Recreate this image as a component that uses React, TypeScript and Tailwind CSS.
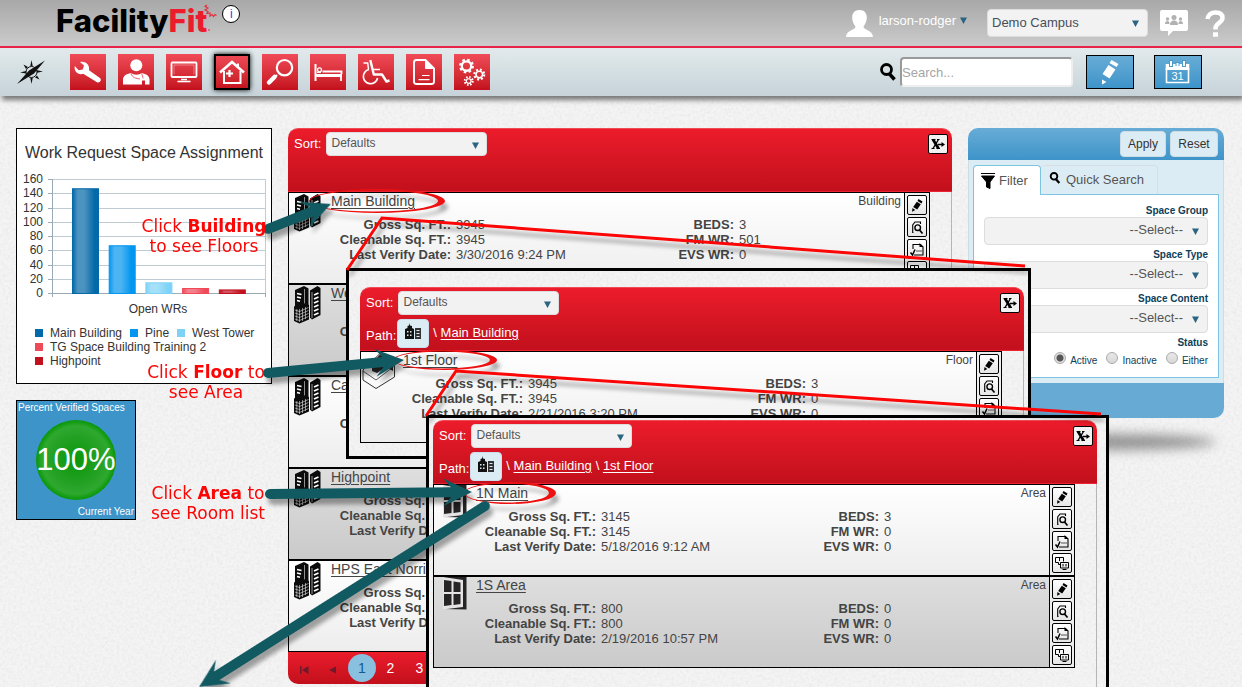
import { useState } from "react"
import type { ReactNode } from "react"

const bars = [
  { name: 'Main Building', value: 147, color: '#0469a8', light: '#4b93c0' },
  { name: 'Pine', value: 67, color: '#0396ef', light: '#4cb4f3' },
  { name: 'West Tower', value: 15, color: '#7ed2f7', light: '#a5e0f9' },
  { name: 'TG Space Building Training 2', value: 7, color: '#ef4a5a', light: '#f57f8a' },
  { name: 'Highpoint', value: 5, color: '#c2101f', light: '#d4525d' },
]

const ticks = [160, 140, 120, 100, 80, 60, 40, 20, 0]

type Space = {
  name: string
  sqft?: string
  verified?: string
  counts?: { beds: string; fm: string; evs: string }
}

const buildings: Space[] = [
  { name: 'Main Building', sqft: '3945', verified: '3/30/2016 9:24 PM', counts: { beds: '3', fm: '501', evs: '0' } },
  { name: 'West Tower' },
  { name: 'Care Center' },
  { name: 'Highpoint' },
  { name: 'HPS East Norriton' },
]

const floors: Space[] = [
  { name: '1st Floor', sqft: '3945', verified: '2/21/2016 3:20 PM', counts: { beds: '3', fm: '0', evs: '0' } },
]

const areas: Space[] = [
  { name: '1N Main', sqft: '3145', verified: '5/18/2016 9:12 AM', counts: { beds: '3', fm: '0', evs: '0' } },
  { name: '1S Area', sqft: '800', verified: '2/19/2016 10:57 PM', counts: { beds: '0', fm: '0', evs: '0' } },
]

/* ---------- icons ---------- */

function Caret({ className = '' }: { className?: string }) {
  return (
    <svg viewBox="0 0 7 7" className={`h-[7px] w-[7px] ${className}`} fill="#2b6480" aria-hidden="true">
      <path d="M0 .5h7L3.5 7z" />
    </svg>
  )
}

function Gear({ cx, cy, r }: { cx: number; cy: number; r: number }) {
  const tooth = (2 * Math.PI * (r + 1.6)) / 16
  return (
    <g fill="none" stroke="#fff">
      <circle cx={cx} cy={cy} r={r} strokeWidth={r * 0.5} />
      <circle cx={cx} cy={cy} r={r + 1.6} strokeWidth="2.2" strokeDasharray={`${tooth} ${tooth}`} />
    </g>
  )
}

const modules: { label: string; icon: ReactNode }[] = [
  {
    label: 'Work requests',
    icon: <path fill="#fff" d="M10 8l4 3.6-1.2 4-4.2.7L4.8 12c-1.2 5 3.2 9.400 8.400 7.800L27 28.200c2.600 1.300 4.800-1.700 3.300-3.900L19 16.300C20 10.500 15.500 6.500 10 8z" />,
  },
  {
    label: 'People',
    icon: (
      <g>
        <circle cx="18.300" cy="11.300" r="6" fill="#fff" />
        <path fill="#fff" d="M5 30.500v-5c0-3.500 3-5.500 8-6.500 3 2.300 8 2.300 10.500 0 5 1 8 3 8 6.500v5h-4.500v-4h-3v4z" />
        <path fill="none" stroke="#dd3a48" strokeWidth=".8" d="M13 19.500c1 4 5 5 9 5.500M23.500 19.500c1 2 1.500 3.500 1.500 5" />
      </g>
    ),
  },
  {
    label: 'Equipment',
    icon: (
      <g fill="none" stroke="#fff">
        <rect x="5.500" y="8.500" width="25" height="14.500" rx="1" strokeWidth="1.800" />
        <path strokeWidth="1" opacity=".35" d="M8 20.500V11h20v9.500" />
        <path strokeWidth="1.600" d="M11.500 27.500h13" />
        <path strokeWidth="1.500" d="M15 25.500h6" />
      </g>
    ),
  },
  {
    label: 'Space',
    icon: (
      <g fill="none" stroke="#fff" strokeWidth="2">
        <path d="M6 18.500L18 8l12 10.500" strokeWidth="2.600" />
        <path d="M10 17v12h16.500V17M24 9.500v4" />
        <path d="M12 19.500h7M15.500 16v7" strokeWidth="2.200" />
      </g>
    ),
  },
  {
    label: 'Search',
    icon: (
      <g fill="none" stroke="#fff">
        <circle cx="22.500" cy="13.700" r="7.700" strokeWidth="2.200" />
        <path d="M15 21l-2 2" strokeWidth="2" />
        <path d="M12.500 23L7 28.500" strokeWidth="4.500" strokeLinecap="round" />
      </g>
    ),
  },
  {
    label: 'Beds',
    icon: (
      <g fill="none" stroke="#fff">
        <path d="M5.500 10v17" strokeWidth="2" />
        <path d="M5 21.500h27" strokeWidth="3" />
        <path d="M31 20v7M12.500 17.500h19v2.500" strokeWidth="1.800" />
        <path d="M7 18.500h4" strokeWidth="1" />
        <circle cx="9.500" cy="15.800" r="2" strokeWidth="1.300" />
      </g>
    ),
  },
  {
    label: 'Accessibility',
    icon: (
      <g fill="none" stroke="#fff" strokeWidth="2" strokeLinejoin="round">
        <path d="M5.500 9h4.200l.8 6" strokeWidth="1.500" />
        <path d="M12.300 6l3.500 14.500h8.200l4.500 7 3-1" strokeWidth="2.400" />
        <path d="M11 15.500a7.200 7.200 0 1 0 8.600 8.500" strokeWidth="1.700" />
        <path d="M14 15.500h8" strokeWidth="1.500" />
      </g>
    ),
  },
  {
    label: 'Documents',
    icon: (
      <g fill="none" stroke="#fff" strokeWidth="1.900">
        <path d="M19.500 6H10.500a2.500 2.500 0 0 0-2.500 2.500v19a2.500 2.500 0 0 0 2.500 2.500h15a2.500 2.500 0 0 0 2.500-2.500V14.500z" />
        <path d="M19.500 6v8.500H28z" fill="#fff" strokeWidth="1" />
        <path d="M16 21.500h7.500M12.500 25.700h11" strokeWidth="1.200" />
      </g>
    ),
  },
  {
    label: 'Settings',
    icon: (
      <g>
        <Gear cx={12.500} cy={12} r={4.700} />
        <Gear cx={25.300} cy={20.500} r={3.300} />
        <Gear cx={14.700} cy={27} r={2.300} />
      </g>
    ),
  },
]

function BuildingIcon() {
  return (
    <svg viewBox="0 0 28 39" className="h-[39px] w-7" aria-hidden="true">
      <path fill="#0b0b0b" d="M1 5L10 1l4.500 2.500V20L7 24l-6-3z" />
      <path stroke="#fff" strokeWidth="1.500" d="M3 8.500l4.500 1M3 12l4 1M3 15.500l3 .8" />
      <path stroke="#ccc" strokeWidth=".7" d="M10.500 4v15" />
      <path fill="#0b0b0b" d="M16 5.500L23.500 1 26.500 3v27L18 34.500l-2-2z" />
      <path stroke="#ddd" strokeWidth=".7" d="M18 7v26" />
      <path stroke="#fff" strokeWidth="1.700" d="M20 10l4.500-2M20 14l4.500-2M20 18l4.500-2M20 22l4.500-2M20 26l4.500-2M20 30l4.500-2" />
      <path fill="#0b0b0b" d="M0 21.500l8-4 7 2.500v14.500l-9.500 4L0 36z" />
      <path stroke="#e4e4e4" strokeWidth=".6" fill="none" d="M.8 25l4.700 1.500 9-4M.8 28l4.700 1.500 9-4M.8 31l4.700 1.500 9-4M.8 34l4.700 1.500 9-4M5.500 24v13M2.800 24v12M8.500 23v13M11.500 22v12" />
    </svg>
  )
}

function FloorIcon() {
  return (
    <svg viewBox="0 0 34 38" className="h-[38px] w-[34px]" aria-hidden="true">
      <path fill="#fafafa" stroke="#333" strokeWidth="1" d="M1 18L18 1.500 32.500 11v14L14 36.500 1 28z" />
      <path fill="#2a2a2a" d="M10 11l8-8.500L31 11v8l-7-4-9 6-5-2z" />
      <path fill="#9a9a9a" d="M15 10l4-3.500 7 4.500-5 4z" />
      <path fill="none" stroke="#333" strokeWidth=".8" d="M1 19l13 9 18.500-14" />
    </svg>
  )
}

function AreaIcon() {
  return (
    <svg viewBox="0 0 24 33" className="ml-1 h-[33px] w-6" aria-hidden="true">
      <path fill="#262424" d="M0 0h23.500v32.500L0 32z" />
      <path fill="#e4e4e4" d="M0 0l20 3v27L0 32.500z" />
      <path fill="#262424" d="M1 3l7.500 1v11H1zM10.500 4.500l7 1V15h-7zM1 17h7.500v11l-7.500 1zM10.500 17h7v10l-7 .900z" />
    </svg>
  )
}

function PencilGlyph() {
  return (
    <g>
      <path d="M11.500 4.500l4 2.500-1 2-4-2.500zM9.800 7.200l4 2.500-3.600 5.300-4-2.600z" />
      <path d="M5.500 13.500l2.800 2L5 17.200z" />
    </g>
  )
}

const actions: { label: string; glyph: ReactNode }[] = [
  { label: 'Edit', glyph: <g transform="translate(-1 -1.500)"><PencilGlyph /></g> },
  {
    label: 'View details',
    glyph: (
      <g fill="none" stroke="#000">
        <path d="M5.500 14.500h-.8V7l2.300-3h5.500v2" strokeWidth="1.100" />
        <circle cx="9.700" cy="9.700" r="2.800" strokeWidth="1.400" />
        <path d="M11.500 12l3 3.500" strokeWidth="1.700" />
      </g>
    ),
  },
  {
    label: 'Checklist',
    glyph: (
      <g fill="none" stroke="#000">
        <path d="M5 9V4.500h7.500l2.500 2.500v8H6" strokeWidth="1.100" />
        <path d="M11.500 3l4 4h-4z" fill="#000" stroke="none" />
        <path d="M2.500 12.500l2 2.500 2.500-5.500" strokeWidth="1.500" />
        <path d="M8 11h6" stroke="#888" strokeWidth="1.500" />
      </g>
    ),
  },
  {
    label: 'Rooms',
    glyph: (
      <g fill="none" stroke="#000" strokeWidth="1">
        <path d="M7 10.500H5.500v-2h-3v-5h8v4" />
        <path d="M6.500 4v3M7.500 8.500h8v5.500h-8zM10 10v2.500M13 10v2.500M9.500 15.500h4" />
      </g>
    ),
  },
]

function MagnifierIcon({ className }: { className: string }) {
  return (
    <svg viewBox="0 0 16 18" className={className} fill="none" stroke="#000" aria-hidden="true">
      <circle cx="6.500" cy="6.500" r="5" strokeWidth="2.800" />
      <path d="M9.500 11l5 5.500" strokeWidth="3.500" />
    </svg>
  )
}

/* ---------- shared pieces ---------- */

function Paper({ id }: { id: string }) {
  return (
    <svg className="pointer-events-none absolute inset-0 h-full w-full" aria-hidden="true">
      <filter id={id}>
        <feTurbulence type="fractalNoise" baseFrequency="0.350" numOctaves="4" seed="4" />
        <feColorMatrix values="0 0 0 0 .45  0 0 0 0 .45  0 0 0 0 .45  .5 .5 0 0 -.4" />
      </filter>
      <rect width="100%" height="100%" filter={`url(#${id})`} opacity=".4" />
    </svg>
  )
}

function SpaceRow({ space, type, icon, dark }: { space: Space; type: string; icon: ReactNode; dark: boolean }) {
  return (
    <div className={`mr-[21px] flex h-[92px] border border-black bg-linear-to-b ${dark ? 'from-[#dedede] to-[#cacaca]' : 'from-white to-[#ededed]'}`}>
      <div className="w-[42px] shrink-0 pl-[5px]">{icon}</div>
      <div className="min-w-0 flex-1">
        <div className="flex justify-between pr-[3px]">
          <a href="#" className="text-sm leading-4 text-[#444] underline underline-offset-2">{space.name}</a>
          {space.counts && <span className="text-xs leading-4 text-[#444]">{type}</span>}
        </div>
        <div className="mt-2 flex whitespace-nowrap">
          <dl className="grid w-[283px] grid-cols-[120px_1fr] gap-x-[5px] text-[13px] leading-[15px]">
            <dt className="text-right font-bold">Gross Sq. FT.:</dt>
            <dd>{space.sqft}</dd>
            <dt className="justify-self-end font-bold">Cleanable Sq. FT.:</dt>
            <dd>{space.sqft}</dd>
            <dt className="text-right font-bold">Last Verify Date:</dt>
            <dd>{space.verified}</dd>
          </dl>
          {space.counts && (
            <dl className="grid grid-cols-[120px_1fr] gap-x-[5px] text-[13px] leading-[15px]">
              <dt className="text-right font-bold">BEDS:</dt>
              <dd>{space.counts.beds}</dd>
              <dt className="text-right font-bold">FM WR:</dt>
              <dd>{space.counts.fm}</dd>
              <dt className="text-right font-bold">EVS WR:</dt>
              <dd>{space.counts.evs}</dd>
            </dl>
          )}
        </div>
      </div>
      <div className="flex w-[25px] shrink-0 flex-col gap-[2px] border-l border-black bg-[#eee] pt-[2px] pl-[2px]">
        {actions.map((a) => (
          <button key={a.label} aria-label={a.label} className="h-5 w-5 rounded-xs border border-black bg-linear-to-b from-white to-[#e6e6e6]">
            <svg viewBox="0 0 18 18" className="h-[18px] w-[18px]">{a.glyph}</svg>
          </button>
        ))}
      </div>
    </div>
  )
}

type ListProps = {
  id: string
  type: string
  spaces: Space[]
  icon: ReactNode
  path?: string[]
  children?: ReactNode
}

function SpaceList({ id, type, spaces, icon, path, children }: ListProps) {
  return (
    <section className="relative flex w-full flex-1 flex-col">
      <div className="flex h-16 justify-between rounded-t-[10px] border-t border-b border-t-[#f04a55] border-b-[#ee2233] bg-linear-to-b from-[#ec1c2b] to-[#c2101c] pt-[3px] pr-1 pl-[6px] text-white">
        <div className="text-[13px]">
          <div className="flex items-center gap-[5px]">
            <label htmlFor={id}>Sort:</label>
            <div className="relative">
              <select id={id} className="h-6 w-[161px] appearance-none rounded border border-[#ddd] bg-[#f2f2f2] px-1 pb-[2px] text-xs text-[#555]">
                <option>Defaults</option>
              </select>
              <Caret className="absolute top-[10px] right-2" />
            </div>
          </div>
          {path && (
            <div className="mt-1 flex items-center">
              <span className="pt-1">Path:</span>
              <button aria-label="All buildings" className="mr-1 ml-px flex h-[29px] w-8 justify-center rounded border border-[#cde] bg-[#dcecf4] pt-[3px]">
                <svg viewBox="0 0 16 16" className="h-4 w-4" fill="#111">
                  <path fillRule="evenodd" d="M0 16V6l2.500-1V3L4 2.500 4.500 0 5 2.500 7 3v2l2 1v10zM2 8v1.500h1.500V8zm3 0v1.500h1.500V8zM2 11.500V13h1.500v-1.500zm3 0V13h1.500v-1.500z" />
                  <path fill="#333" fillRule="evenodd" d="M10 5h6v11h-6zm1.500 2v1h3V7zm0 3v1h3v-1zm0 3v1h3v-1z" />
                </svg>
              </button>
              <nav aria-label="Path" className="flex gap-1 pb-[2px]">
                {path.map((p) => (
                  <span key={p}>{'\\ '}<a href="#" className="underline underline-offset-2">{p}</a></span>
                ))}
              </nav>
            </div>
          )}
        </div>
        <button aria-label="Export to Excel" className="mt-[2px] h-5 w-5 shrink-0 rounded-xs border border-black bg-[#f2f2f2]">
          <svg viewBox="0 0 18 18" className="h-[18px] w-[18px]" fill="none" stroke="#000">
            <path d="M4 4.500l5.500 9" strokeWidth="2.800" />
            <path d="M9.500 4.500L4 13.500" strokeWidth="1.400" />
            <path d="M2.500 4.500h4M8 4.500h2.500M2.500 13.500h3M7.500 13.500h3.500" strokeWidth="1.100" />
            <path d="M9 9.500h5" strokeWidth="1.500" />
            <path d="M12.500 7l3.500 2.500-3.500 2.500z" fill="#000" stroke="none" />
          </svg>
        </button>
      </div>
      <div className="flex-1 border-r border-[#b5b5b5]">
        {spaces.map((s, i) => (
          <SpaceRow key={s.name} space={s} type={type} icon={icon} dark={i % 2 == 1} />
        ))}
      </div>
      {children}
    </section>
  )
}

function WorkRequestChart() {
  const y = (v: number) => 115 - (v * 114) / 160
  return (
    <div className="h-64 border border-black bg-white">
      <h2 className="pt-[15px] text-center text-base leading-[18px] text-[#333]">Work Request Space Assignment</h2>
      <svg viewBox="0 0 254 140" className="mt-4 h-[140px] w-full overflow-visible font-['Liberation_Sans',Arial,sans-serif] text-xs" fill="#333">
        <defs>
          {bars.map((b, i) => (
            <linearGradient key={b.name} id={`bar${i}`}>
              <stop offset="0" stopColor={b.color} />
              <stop offset=".2" stopColor={b.light} />
              <stop offset=".45" stopColor={b.light} />
              <stop offset=".85" stopColor={b.color} />
            </linearGradient>
          ))}
        </defs>
        {ticks.map((t) => (
          <g key={t}>
            <path d={`M35 ${Math.round(y(t)) + 0.5}H249`} stroke={t == 0 ? '#9aabb5' : '#bfccd4'} />
            <path d={`M31 ${Math.round(y(t)) + 0.5}h4`} stroke="#9aabb5" />
            <text x="26" y={Math.round(y(t)) + 4} textAnchor="end">{t}</text>
          </g>
        ))}
        <path d="M35.500 1v118M248.500 115v4" stroke="#9aabb5" />
        <path d="M248.500 1v114" stroke="#bfccd4" />
        {bars.map((b, i) => (
          <rect key={b.name} x={55.500 + i * 36.700} y={y(b.value) + 0.500} width="26" height={115 - y(b.value)} fill={`url(#bar${i})`} stroke={b.color} />
        ))}
        <text x="141" y="135" textAnchor="middle">Open WRs</text>
      </svg>
      <ul className="mt-2 flex flex-wrap gap-x-2 pl-[18px] text-xs leading-[14px] text-[#333]">
        {bars.map((b) => (
          <li key={b.name} className="flex items-center gap-[7px]">
            <span className="h-2 w-2" style={{ backgroundColor: b.color }} />
            {b.name}
          </li>
        ))}
      </ul>
    </div>
  )
}

function FilterSelect({ id, label }: { id: string; label: string }) {
  return (
    <div className="mb-1 flex flex-col">
      <label htmlFor={id} className="text-right text-[10px] leading-3 font-bold text-[#0d4059]">{label}</label>
      <div className="relative">
        <select id={id} className="h-7 w-full appearance-none rounded border border-[#ddd] bg-[#f2f2f2] pr-6 pb-[2px] text-right text-[13px] text-[#555] [text-align-last:right]">
          <option>--Select--</option>
        </select>
        <Caret className="absolute top-[11px] right-[9px]" />
      </div>
    </div>
  )
}

function FilterPanel() {
  const [status, setStatus] = useState('Active')
  return (
    <aside className="w-64 shrink-0">
      <div className="overflow-hidden rounded-[10px]">
        <div className="flex h-8 justify-end gap-1 bg-linear-to-b from-[#67acd6] to-[#3d94c9] pt-[3px] pr-[6px] text-xs text-[#333]">
          <button className="h-[26px] w-[46px] rounded border border-[#ccdde6] bg-[#dcecf4]">Apply</button>
          <button className="h-[26px] w-12 rounded border border-[#ccdde6] bg-[#dcecf4]">Reset</button>
        </div>
        <div className="border-x border-[#ccdde6] bg-[#dcecf4] px-1 py-[5px]">
          <div role="tablist" className="flex text-[13px] text-[#555]">
            <button role="tab" aria-selected="true" className="relative -mb-px flex h-[30px] w-[68px] items-center gap-1 rounded-t border border-b-0 border-[#7cc5e0] bg-white pl-[7px]">
              <svg viewBox="0 0 14 16" className="h-4 w-[14px]" aria-hidden="true">
                <path d="M0 .500h14M.500 3h13L9 9v6.500L5.500 14V9z" stroke="#000" strokeWidth="1" />
              </svg>
              Filter
            </button>
            <button role="tab" aria-selected="false" className="flex h-[29px] w-[117px] items-center gap-[5px] rounded-t border border-b-0 border-l-0 border-[#d6dfe4] pl-2">
              <MagnifierIcon className="mb-1 h-3 w-3" />
              Quick Search
            </button>
          </div>
          <div className="h-[184px] border border-[#7cc5e0] bg-white px-[10px] pt-[10px]">
            <FilterSelect id="space-group" label="Space Group" />
            <FilterSelect id="space-type" label="Space Type" />
            <FilterSelect id="space-content" label="Space Content" />
            <fieldset className="text-[10px] text-[#0d4059]">
              <legend className="ml-auto leading-3 font-bold">Status</legend>
              <div className="flex justify-end gap-[9px] pt-[3px]">
                {['Active', 'Inactive', 'Either'].map((s) => (
                  <label key={s} className="flex items-start gap-1 leading-[18px]">
                    <input
                      type="radio"
                      name="status"
                      checked={status == s}
                      onChange={() => setStatus(s)}
                      className="h-3 w-3 appearance-none rounded-full border border-[#aaa] bg-linear-to-b from-[#e8e8e8] to-[#d8d8d8] checked:bg-[radial-gradient(circle,#555_0_3px,#e0e0e0_4px)]"
                    />
                    {s}
                  </label>
                ))}
              </div>
            </fieldset>
          </div>
        </div>
        <div className="h-[35px] bg-[#67abd5]" />
      </div>
      <div className="mx-2 mt-4 h-4 rounded-[50%] bg-black/40 blur-[6px]" />
    </aside>
  )
}

/* ---------- walkthrough notes drawn over the page ---------- */

function Arrow({ from, to }: { from: [number, number]; to: [number, number] }) {
  const dx = to[0] - from[0]
  const dy = to[1] - from[1]
  const len = Math.hypot(dx, dy)
  const angle = (Math.atan2(dy, dx) * 180) / Math.PI
  return (
    <path
      transform={`translate(${from[0]} ${from[1]}) rotate(${angle})`}
      fill="#125a61"
      d={`M0 -5H${len - 21}L${len - 29} -14L${len} 0L${len - 29} 14L${len - 21} 5H0A5 5 0 0 1 0 -5Z`}
    />
  )
}

function Ring({ x1, x2, cy, ry }: { x1: number; x2: number; cy: number; ry: number }) {
  const r = (x2 - x1) / 2
  const q = r - 4
  return (
    <path
      fill="#ee1111"
      fillRule="evenodd"
      d={`M${x1} ${cy}a${r} ${ry} 0 1 0 ${2 * r} 0a${r} ${ry} 0 1 0 ${-2 * r} 0zM${x1 + 1} ${cy}a${q} ${ry - 1.5} 0 1 0 ${2 * q} 0a${q} ${ry - 1.5} 0 1 0 ${-2 * q} 0z`}
    />
  )
}

function Notes() {
  return (
    <>
      <svg viewBox="0 0 1242 687" className="pointer-events-none absolute top-0 left-0 h-[687px] w-[1242px]" aria-hidden="true">
        <defs>
          <filter id="cast" x="-10%" y="-10%" width="120%" height="130%" colorInterpolationFilters="sRGB">
            <feDropShadow dx="3" dy="6" stdDeviation="2" floodColor="#000" floodOpacity=".35" />
          </filter>
        </defs>
        <g filter="url(#cast)">
          <Ring x1={309} x2={445} cy={201} ry={12} />
          <Ring x1={393} x2={497} cy={360} ry={10} />
          <Ring x1={464} x2={556} cy={493} ry={11} />
          <g fill="none" stroke="#fb0505" strokeWidth="3">
            <path d="M347 270L382 218L1025 266" />
            <path d="M426 416L456 371L1101 414" />
          </g>
          <Arrow from={[268, 229]} to={[331, 204]} />
          <Arrow from={[268, 373]} to={[404, 360]} />
          <Arrow from={[270, 494]} to={[472, 492]} />
          <Arrow from={[485, 506]} to={[199, 687]} />
        </g>
      </svg>
      <div className="pointer-events-none text-center font-['DejaVu_Sans',Verdana,sans-serif] text-[17px] leading-5 whitespace-nowrap text-[#fb0505]">
        <p className="absolute top-[216px] left-[134px] w-[140px]">Click <b>Building</b><br />to see Floors</p>
        <p className="absolute top-[362px] left-[136px] w-[140px]">Click <b>Floor</b> to<br />see Area</p>
        <p className="absolute top-[483px] left-[138px] w-[140px]">Click <b>Area</b> to<br />see Room list</p>
      </div>
    </>
  )
}

/* ---------- page ---------- */

export default function App() {
  const [current, setCurrent] = useState<string>('Space')

  return (
    <div className="relative min-h-screen overflow-hidden bg-[#f4f4f4] font-['Liberation_Sans',Arial,sans-serif] text-[13px] text-[#444]">
      <Paper id="paper" />

      <header className="relative shadow-[2px_4px_5px_#777]">
        <div className="flex h-12 items-center justify-between border-b-2 border-[#ea2447] bg-linear-to-b from-[#a8a8a8] to-[#cbcbcb] pr-4 pl-14">
          <div className="flex h-full items-start">
            <div className="font-['Inter',sans-serif] text-[31px] leading-[42px] font-extrabold text-black">
              Facility<span className="text-[#ed1c2c]">Fit</span>
            </div>
            <svg viewBox="0 0 14 28" className="-ml-1 mt-1 h-7 w-[14px]" fill="none" stroke="#e0303c" strokeWidth="1.200" aria-hidden="true">
              <path d="M4 1l-2 1.500 3 1.500-3 2 3 1.500-1 2 3-.5v3l2-1.500 1.500 2 1.500-2 1.500 1" />
              <path d="M5 26h2" />
            </svg>
            <button className="mt-[5px] ml-[5px] h-[18px] w-[18px] rounded-full border border-black bg-white text-xs leading-4 text-[#3a3ae0]">i</button>
          </div>
          <div className="flex items-center">
            <svg viewBox="0 0 27 27" className="mr-[6px] h-[27px] w-[27px]" fill="#fff" aria-hidden="true">
              <path d="M13.500 0c5 0 7.500 3.500 7.300 8-.2 4-2 6.500-3.300 8.500 0 4 9 3 9.500 10.500H0C.5 19.500 9.500 20.500 9.500 16.500 8 14.500 6.400 12 6.200 8 6 3.500 8.500 0 13.500 0z" />
            </svg>
            <button className="mb-[5px] flex items-center gap-1 text-white">larson-rodger <Caret /></button>
            <div className="relative mr-3 ml-5">
              <select aria-label="Campus" className="h-7 w-[161px] appearance-none rounded border border-[#ddd] bg-[#f2f2f2] px-1 text-[13px] text-[#444f5a]">
                <option>Demo Campus</option>
              </select>
              <Caret className="absolute top-[11px] right-[9px]" />
            </div>
            <button aria-label="Messages" className="mr-[17px]">
              <svg viewBox="0 0 28 26" className="h-[26px] w-7">
                <path fill="#fff" d="M2 0h24a2 2 0 0 1 2 2v17a2 2 0 0 1-2 2H13l-5 5v-5H2a2 2 0 0 1-2-2V2a2 2 0 0 1 2-2z" />
                <g fill="#b2b2b2">
                  <circle cx="14" cy="7.500" r="2.500" />
                  <path d="M10 15c0-3 1.500-4.500 4-4.500s4 1.500 4 4.500z" />
                  <circle cx="7.500" cy="9" r="1.700" />
                  <path d="M5 14c0-2 1-3 2.500-3s2 1 2 3zM18.500 14c0-2 .5-3 2-3s2.500 1 2.500 3z" />
                  <circle cx="20.500" cy="9" r="1.700" />
                </g>
              </svg>
            </button>
            <button aria-label="Help">
              <svg viewBox="0 0 21 27" className="h-[27px] w-[21px]" fill="none" stroke="#fff" strokeWidth="4.500">
                <path d="M2.500 9C3 5 6 2.500 10.500 2.500c4.500 0 7 2 7 5.500 0 4.500-7 5.500-7 10v1.500" />
                <path d="M8 24.500h5" />
              </svg>
            </button>
          </div>
        </div>

        <div className="flex h-12 items-center bg-linear-to-b from-[#e2eaec] to-[#c6d3d9] pr-10 pl-[17px]">
          <svg viewBox="0 0 28 26" className="mr-[25px] h-[26px] w-7" aria-hidden="true">
            <circle cx="14.500" cy="13" r="5.500" fill="none" stroke="#111" strokeWidth="1" />
            <path fill="#111" d="M28 1.500L17 14.500 0 25 12 11.500zM14.500 1l1.200 6h-2.400zM14.500 25l-1.200-6h2.400zM3 13.500l6-1.500v2.500zM26 12.500l-6 1.200v-2.500zM6.500 5.500l4.500 2.500-2 2zM22.500 20.500l-4.500-2 2-2z" />
          </svg>
          <nav className="flex gap-3">
            {modules.map((m) => (
              <button
                key={m.label}
                aria-label={m.label}
                onClick={() => setCurrent(m.label)}
                className={`h-9 w-9 bg-linear-to-b from-[#f04a57] to-[#c30f1c] ${current == m.label ? 'shadow-[inset_0_0_0_2px_#000,0_0_5px_#000]' : ''}`}
              >
                <svg viewBox="0 0 36 36" className="h-9 w-9">{m.icon}</svg>
              </button>
            ))}
          </nav>
          <div className="ml-auto flex items-center">
            <MagnifierIcon className="mr-1 h-[18px] w-4" />
            <input
              type="search"
              aria-label="Search"
              placeholder="Search..."
              className="h-[30px] w-[173px] rounded border-2 border-t-[#999] border-r-[#eee] border-b-[#eee] border-l-[#999] bg-white text-[13px] placeholder:text-[#a5a5a5]"
            />
            <button aria-label="Notes" className="mr-5 ml-[13px] flex h-[34px] w-12 items-center justify-center border border-black bg-linear-to-b from-[#67acd6] to-[#3d94c9]">
              <svg viewBox="0 0 18 25" className="h-[25px] w-[18px]" fill="#fff">
                <path d="M10.500 0l7 4-2 3-7-4zM7.500 5l7 4.500-6 9-7-4.500zM1 19.500l4.500 2.500L1 24.500z" />
              </svg>
            </button>
            <button aria-label="Calendar" className="flex h-[34px] w-12 items-center justify-center border border-black bg-linear-to-b from-[#67acd6] to-[#3d94c9]">
              <svg viewBox="0 0 26 24" className="h-6 w-[26px]">
                <path d="M1.500 8v14.500h22V8" fill="none" stroke="#fff" strokeWidth="1.600" />
                <path d="M.700 4h23.600v6H.700z" fill="#fff" />
                <path d="M6 0v7M19 0v7M12.500 2v4" stroke="#4a9ccd" strokeWidth="4" />
                <path d="M6 1v5M19 1v5M12.500 3v3" stroke="#fff" strokeWidth="2" />
                <text x="12.500" y="20" textAnchor="middle" fontSize="11" fill="#fff">31</text>
              </svg>
            </button>
          </div>
        </div>
      </header>

      <main className="relative flex gap-4 pt-8 pr-[18px] pb-[3px] pl-4">
        <div className="flex w-64 shrink-0 flex-col gap-4">
          <WorkRequestChart />
          <div className="flex h-[120px] w-[120px] flex-col justify-between border border-black bg-[#3d94c9] text-[10px] leading-[14px] text-white">
            <span className="pl-px whitespace-nowrap">Percent Verified Spaces</span>
            <div className="mx-auto flex h-20 w-20 items-center justify-center rounded-full bg-[radial-gradient(circle,#0a970a_0%,#22a022_40%,#2fa82f_60%,#0a980a_70%)] text-[31px]">
              100%
            </div>
            <span className="pr-px text-right">Current Year</span>
          </div>
        </div>

        <div className="flex min-w-0 flex-1">
          <SpaceList id="sort-buildings" type="Building" spaces={buildings} icon={<BuildingIcon />}>
            <nav aria-label="Pages" className="flex h-8 items-center rounded-b-[10px] bg-linear-to-b from-[#ec1c2b] to-[#c2101c] pl-3 text-white">
              <button aria-label="First page" className="mr-5 pt-1">
                <svg viewBox="0 0 9 8" className="h-2 w-[9px]" fill="#6d1b2c"><path d="M0 0h1.500v8H0zM8.500 0v8L2 4z" /></svg>
              </button>
              <button aria-label="Previous page" className="mr-3 pt-1">
                <svg viewBox="0 0 7 8" className="h-2 w-[7px]" fill="#6d1b2c"><path d="M7 .500v7L0 4z" /></svg>
              </button>
              <button className="h-7 w-7 rounded-full bg-[#89bfdf] text-sm text-[#115a8a]">1</button>
              <button className="w-[29px] text-sm">2</button>
              <button className="w-[29px] text-sm">3</button>
            </nav>
          </SpaceList>
        </div>

        <FilterPanel />
      </main>

      <div className="absolute top-[268px] left-[346px] flex h-[191px] w-[685px] border-[3px] border-black bg-[#f4f4f4] pt-4 pr-1 pl-[11px]">
        <Paper id="paper-floor" />
        <SpaceList id="sort-floors" type="Floor" spaces={floors} path={['Main Building']} icon={<div className="-ml-1"><FloorIcon /></div>} />
      </div>

      <div className="absolute top-[415px] left-[426px] flex h-[290px] w-[683px] border-[3px] border-black bg-[#f4f4f4] pt-[2px] pr-[9px] pl-1">
        <Paper id="paper-area" />
        <SpaceList id="sort-areas" type="Area" spaces={areas} path={['Main Building', '1st Floor']} icon={<AreaIcon />} />
      </div>

      <Notes />
    </div>
  )
}
